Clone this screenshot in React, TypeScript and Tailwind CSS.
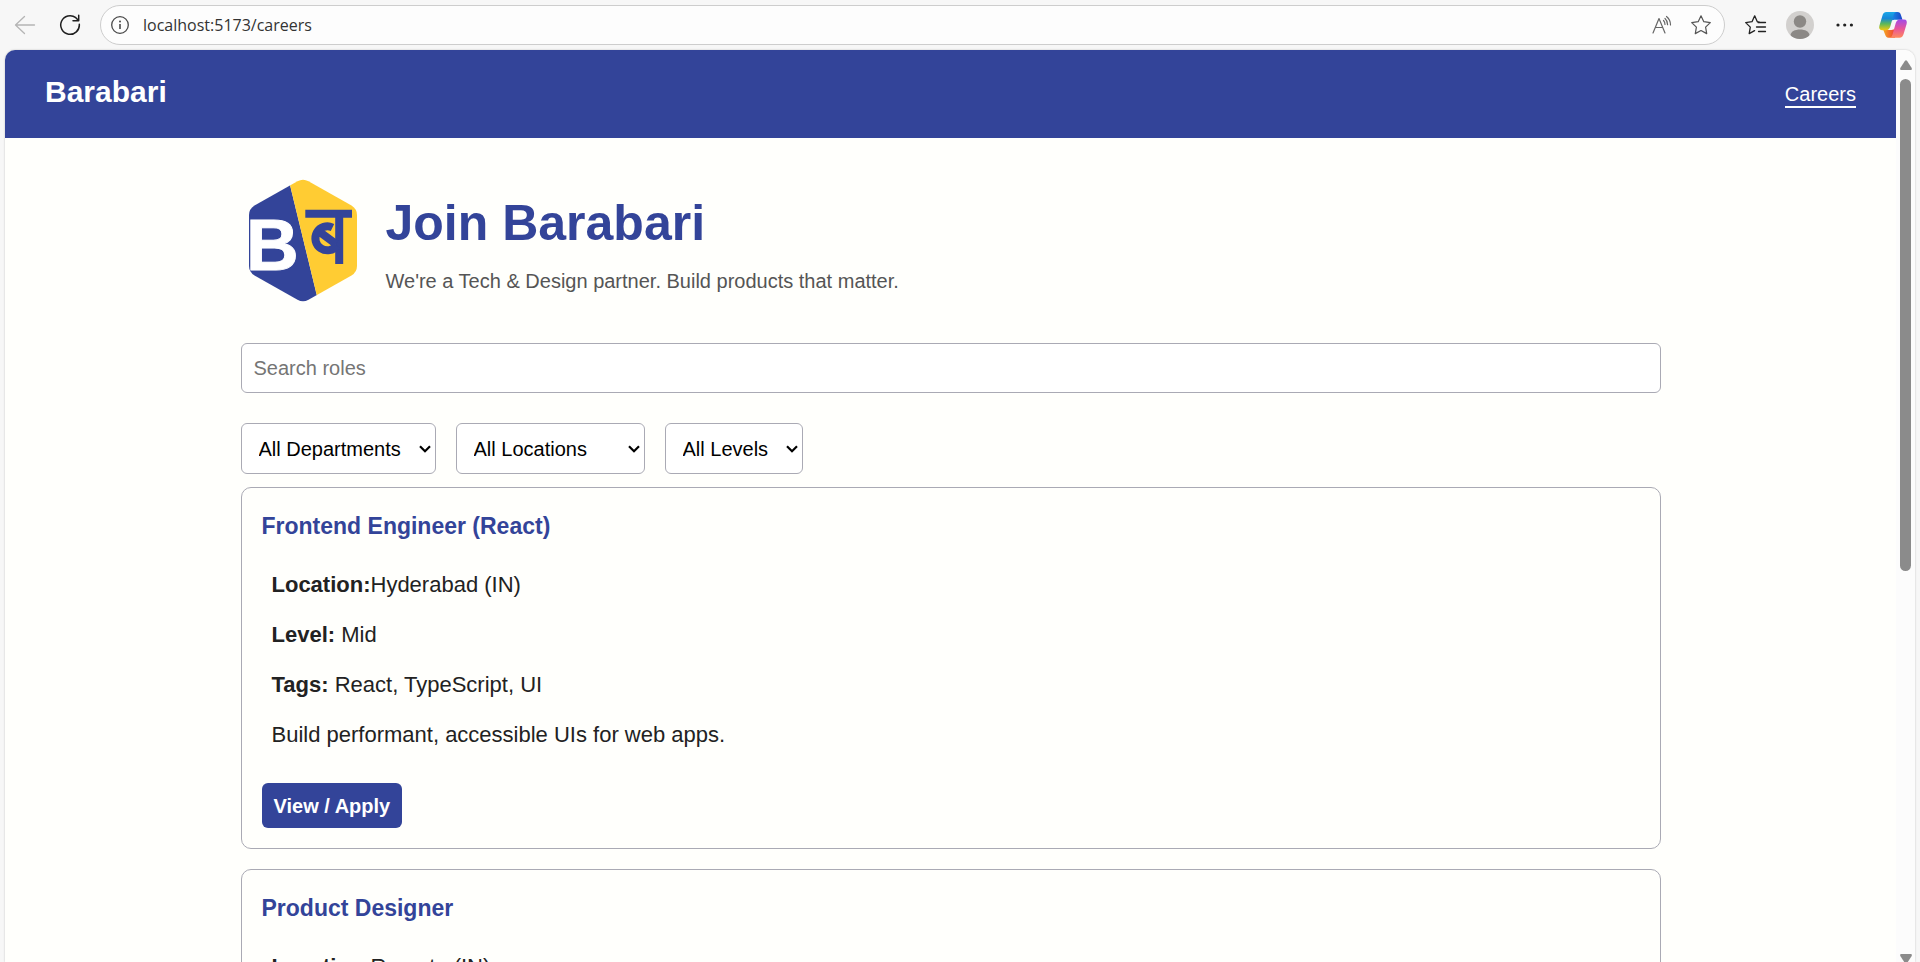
import { useState } from "react";

type Job = {
  title: string;
  department: string;
  location: string;
  level: string;
  tags: string[];
  summary: string;
};

const JOBS: Job[] = [
  {
    title: "Frontend Engineer (React)",
    department: "Engineering",
    location: "Hyderabad (IN)",
    level: "Mid",
    tags: ["React", "TypeScript", "UI"],
    summary: "Build performant, accessible UIs for web apps.",
  },
  {
    title: "Product Designer",
    department: "Design",
    location: "Remote (IN)",
    level: "Senior",
    tags: ["Figma", "UX"],
    summary: "Design delightful product experiences.",
  },
];

function BrowserBar() {
  return (
    <div className="flex h-[50px] shrink-0 items-center bg-[#f7f7f7] pb-[1px] pr-3 pl-[14px] text-[#1f1f1f]">
      <button aria-label="Back" className="flex w-[22px] justify-center text-[#b5b5b5]">
        <svg width="22" height="20" viewBox="0 0 22 20" fill="none" stroke="currentColor" strokeWidth="1.3" strokeLinecap="round" strokeLinejoin="round">
          <path d="M20.500 10H1.500M10.500 1.500L1.500 10L10.500 18.500" />
        </svg>
      </button>
      <button aria-label="Refresh" className="ml-[23px] flex">
        <svg width="22" height="22" viewBox="0 0 22 22" fill="none" stroke="currentColor" strokeWidth="1.500" strokeLinecap="round" strokeLinejoin="round">
          <path d="M20.300 10.200A9.300 9.300 0 1 1 16.800 3.700L19.500 6.600M19.700 1.200V6.800H14" />
        </svg>
      </button>
      <div className="ml-[19px] flex h-[40px] grow items-center rounded-full border border-[#cdcdcd] bg-[#fdfdfd] pr-[12px] pl-[9px]">
        <svg width="20" height="20" viewBox="0 0 20 20" fill="none" stroke="#4a4a4a" strokeWidth="1.300">
          <circle cx="10" cy="10" r="8.300" />
          <path d="M10 9V14" strokeWidth="1.600" />
          <circle cx="10" cy="6.500" r="1" fill="#4a4a4a" stroke="none" />
        </svg>
        <input
          aria-label="Address"
          defaultValue="localhost:5173/careers"
          className="ml-[13px] min-w-0 grow bg-transparent font-['Open_Sans',sans-serif] text-[16px] text-[#333] outline-none"
        />
        <button aria-label="Read aloud" className="flex">
          <svg width="22" height="20" viewBox="0 0 22 20" fill="none" stroke="#666" strokeWidth="1.200" strokeLinecap="round" strokeLinejoin="round">
            <path d="M2 18L8 3.500L14 18M4.200 12.500H11.800" />
            <path d="M12.500 5.500C13.500 6.500 14 8 14 9.500M14 3.500C15.700 5 16.600 7 16.600 9.700M15.500 1.500C18 3.500 19.500 6.500 19.500 10" />
          </svg>
        </button>
        <button aria-label="Add to favorites" className="ml-[17px] flex">
          <svg width="22" height="22" viewBox="0 0 22 22" fill="none" stroke="#555" strokeWidth="1.200" strokeLinejoin="round">
            <path d="M11 1.800L13.800 7.700L20.300 8.600L15.600 13.100L16.700 19.600L11 16.500L5.300 19.600L6.400 13.100L1.700 8.600L8.200 7.700Z" />
          </svg>
        </button>
      </div>
      <button aria-label="Favorites" className="ml-[19px] flex">
        <svg width="23" height="22" viewBox="0 0 23 22" fill="none" stroke="#222" strokeWidth="1.300" strokeLinecap="round" strokeLinejoin="round">
          <path d="M15.500 8.100L13.300 7.700L10.700 1.800L8 7.700L1.700 8.600L6.300 13.100L5.200 19.600L10.600 16.600M14 8.500H21.500M12.500 13H21.500M14.500 17.500H21.500" />
        </svg>
      </button>
      <button aria-label="Profile" className="ml-[19px] flex">
        <svg width="28" height="28" viewBox="0 0 28 28">
          <defs>
            <clipPath id="avatar"><circle cx="14" cy="14" r="14" /></clipPath>
          </defs>
          <circle cx="14" cy="14" r="14" fill="#d2d0ce" />
          <g clipPath="url(#avatar)" fill="#8b8885">
            <circle cx="14" cy="10.500" r="6.200" />
            <path d="M4.500 28V24.500C4.500 20.500 9 18.500 14 18.500S23.500 20.500 23.500 24.500V28Z" />
          </g>
        </svg>
      </button>
      <button aria-label="More" className="ml-[22px] flex">
        <svg width="18" height="6" viewBox="0 0 18 6" fill="#222">
          <circle cx="2" cy="3" r="1.600" />
          <circle cx="8.700" cy="3" r="1.600" />
          <circle cx="15.400" cy="3" r="1.600" />
        </svg>
      </button>
      <button aria-label="Copilot" className="ml-[24px] flex">
        <svg width="30" height="28" viewBox="0 0 30 28">
          <defs>
            <linearGradient id="cpA" x1="0" y1="0" x2="0" y2="1">
              <stop offset="0" stopColor="#1aa7e8" />
              <stop offset="0.350" stopColor="#1787d8" />
              <stop offset="0.650" stopColor="#5cb85a" />
              <stop offset="1" stopColor="#f2c810" />
            </linearGradient>
            <linearGradient id="cpB" x1="0" y1="0" x2="0" y2="1">
              <stop offset="0" stopColor="#a24be8" />
              <stop offset="0.500" stopColor="#e8559a" />
              <stop offset="1" stopColor="#ff8a5c" />
            </linearGradient>
            <linearGradient id="cpC" x1="0" y1="0" x2="1" y2="0">
              <stop offset="0" stopColor="#1c8fe6" />
              <stop offset="1" stopColor="#1b44c8" />
            </linearGradient>
            <linearGradient id="cpD" x1="0" y1="0" x2="1" y2="0">
              <stop offset="0" stopColor="#f5a623" />
              <stop offset="1" stopColor="#ef4035" />
            </linearGradient>
          </defs>
          <path d="M13 1H19.500C21.500 1 22.400 2.200 23 4.200L24.500 8.800H20C18 8.800 15.800 8.200 13.200 9.800Z" fill="url(#cpC)" />
          <path d="M17 26.800H10.500C8.500 26.800 7.700 25.500 7.100 23.600L5.300 19H10C12.500 19 14.400 19.400 16.800 17.800Z" fill="url(#cpD)" />
          <path d="M8.500 1H18.500C16.500 1.200 15.900 2.800 15.300 4.700L12.300 15.500C11.600 17.800 10.200 19.200 8 19.200H4C1.400 19.200 0.700 17.200 1.400 14.800L4.400 4.700C5.100 2.300 6.200 1 8.500 1Z" fill="url(#cpA)" />
          <path d="M21.500 26.800H11.500C13.500 26.600 14.100 25 14.700 23.100L17.700 12.300C18.400 10 19.800 8.600 22 8.600H26C28.600 8.600 29.300 10.600 28.600 13L25.600 23.100C24.900 25.500 23.800 26.800 21.500 26.800Z" fill="url(#cpB)" />
        </svg>
      </button>
    </div>
  );
}

function Logo() {
  return (
    <svg className="size-[125px] shrink-0" viewBox="0 0 125 125" role="img" aria-label="Barabari logo">
      <defs>
        <clipPath id="hex">
          <path d="M56.500 3.200Q62 0.200 67.500 3.200L110.500 27.500Q116 31 116 37V88Q116 94 110.500 97.500L67.500 121.800Q62 124.800 56.500 121.800L13.500 97.500Q8 94 8 88V37Q8 31 13.500 27.500Z" />
        </clipPath>
      </defs>
      <g clipPath="url(#hex)">
        <path d="M0 0H47.300L77.700 125H0Z" fill="#334499" />
        <path d="M47.300 0H125V125H77.700Z" fill="#ffcc33" />
      </g>
      <text x="5" y="92" fontFamily="Liberation Sans, Arial, sans-serif" fontWeight="700" fontSize="73" fill="#fff" stroke="#fff" strokeWidth="1">B</text>
      <g fill="none" stroke="#334499" strokeWidth="8">
        <path d="M64.300 35.800H111M98.200 36V86" />
        <path d="M91.500 49.500A12 12 0 1 0 96 67.500M76 52L95 66" />
      </g>
    </svg>
  );
}

function Filter({ label, options, width }: { label: string; options: string[]; width: string }) {
  return (
    <div className={"grid items-center " + width}>
      <select
        aria-label={label}
        className="col-start-1 row-start-1 h-[51px] w-full appearance-none rounded-[6px] border border-[#aaaab4] bg-white pl-[17px] text-[20px] text-black"
      >
        <option>{label}</option>
        {options.map((o) => (
          <option key={o}>{o}</option>
        ))}
      </select>
      <svg className="pointer-events-none col-start-1 row-start-1 mr-[5px] justify-self-end" width="12" height="8" viewBox="0 0 12 8" fill="none" stroke="#000" strokeWidth="2.200">
        <path d="M1 1.200L6 6.200L11 1.200" />
      </svg>
    </div>
  );
}

function JobCard({ job }: { job: Job }) {
  return (
    <article className="rounded-[10px] border border-[#aaaab4] p-5">
      <h3 className="text-[23px] leading-[36px] font-bold text-[#334499]">{job.title}</h3>
      <div className="mt-6 flex flex-col gap-[17px] px-[10px] text-[22px] leading-[33px] text-[#222]">
        <p><strong>Location:</strong>{job.location}</p>
        <p><strong>Level:</strong> {job.level}</p>
        <p><strong>Tags:</strong> {job.tags.join(", ")}</p>
        <p>{job.summary}</p>
      </div>
      <button className="mt-8 block h-[45px] rounded-[6px] bg-[#334499] px-3 text-[20px] font-bold text-white">
        View / Apply
      </button>
    </article>
  );
}

function Scrollbar() {
  return (
    <div aria-hidden="true" className="flex w-[19px] shrink-0 flex-col items-center bg-[#fcfcfc] pt-[10px]">
      <svg className="shrink-0" width="12" height="10" viewBox="0 0 12 10" fill="#8b8b8b">
        <path d="M5 0.800Q6 -0.400 7 0.800L11.700 8Q12.200 10 11 10H1Q-0.200 10 0.300 8Z" />
      </svg>
      <div className="mt-[9px] h-6/11 w-[11px] rounded-full bg-[#8b8b8b]" />
      <svg className="mt-auto -mb-[2px] shrink-0" width="12" height="10" viewBox="0 0 12 10" fill="#8b8b8b">
        <path d="M5 9.200Q6 10.400 7 9.200L11.700 2Q12.200 0 11 0H1Q-0.200 0 0.300 2Z" />
      </svg>
    </div>
  );
}

export default function App() {
  const [query, setQuery] = useState("");
  const jobs = JOBS.filter((j) => j.title.toLowerCase().includes(query.toLowerCase()));

  return (
    <div className="flex h-screen flex-col overflow-hidden bg-[#f7f7f7] font-['Liberation_Sans',Arial,sans-serif]">
      <BrowserBar />
      <div className="mx-[5px] flex min-h-0 grow overflow-hidden rounded-t-[10px] bg-[#fffffc] shadow-[0_0_2px_#bbb]">
        <div className="min-w-0 grow overflow-hidden">
          <header className="flex items-start justify-between bg-[#334499] px-10 pt-5 pb-6 text-white">
            <span className="text-[30px] leading-[44px] font-bold">Barabari</span>
            <nav className="flex pt-3">
              <a href="#careers" className="border-b-2 border-white text-[20px] leading-[24px]">Careers</a>
            </nav>
          </header>
          <main className="mx-auto max-w-[1420px] pt-10">
            <section className="flex items-center gap-5">
              <Logo />
              <div className="pt-1">
                <h1 className="text-[50px] leading-[60px] font-bold text-[#334499]">Join Barabari</h1>
                <p className="mt-4 text-[20px] leading-[24px] text-[#555]">
                  We're a Tech &amp; Design partner. Build products that matter.
                </p>
              </div>
            </section>
            <input
              type="search"
              aria-label="Search roles"
              placeholder="Search roles"
              value={query}
              onChange={(e) => setQuery(e.target.value)}
              className="mt-10 block h-[50px] w-full rounded-[6px] border border-[#aaaab4] bg-white px-3 text-[20px] placeholder:text-[#757575]"
            />
            <div className="mt-[30px] flex gap-5">
              <Filter label="All Departments" options={["Engineering", "Design"]} width="w-[195px]" />
              <Filter label="All Locations" options={["Hyderabad (IN)", "Remote (IN)"]} width="w-[189px]" />
              <Filter label="All Levels" options={["Mid", "Senior"]} width="w-[138px]" />
            </div>
            <div className="mt-[13px] flex flex-col gap-5">
              {jobs.map((job) => (
                <JobCard key={job.title} job={job} />
              ))}
            </div>
          </main>
        </div>
        <Scrollbar />
      </div>
    </div>
  );
}
